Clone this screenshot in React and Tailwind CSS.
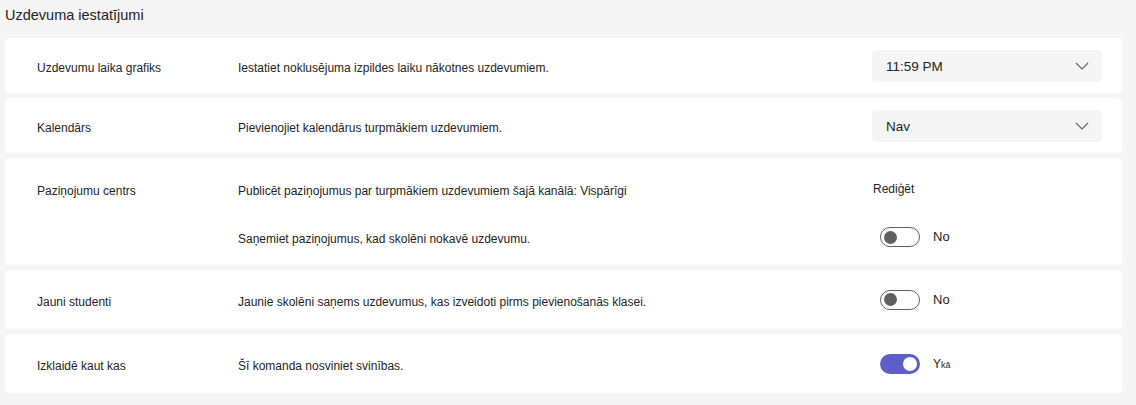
import React from "react";

const font = { fontFamily: "'Liberation Sans', Arial, sans-serif" };

const Chevron = () => (
  <svg width="14" height="8" viewBox="0 0 14 8" fill="none">
    <path d="M1 1l6 6 6-6" stroke="#616161" strokeWidth="1.1" />
  </svg>
);

const Dropdown = ({ value }) => (
  <div className="flex h-[32px] w-[230px] items-center justify-between rounded-[4px] bg-[#f5f5f5] pl-[14px] pr-[13px] text-[13.5px] text-[#242424]">
    <span className="pt-[3px]">{value}</span>
    <Chevron />
  </div>
);

const Toggle = ({ on }) =>
  on ? (
    <div className="flex h-[20px] w-[40px] items-center justify-end rounded-full bg-[#5b5fc7] pr-[3px]">
      <div className="h-[14px] w-[14px] rounded-full bg-white" />
    </div>
  ) : (
    <div className="flex h-[20px] w-[40px] items-center rounded-full border border-[#616161] bg-white pl-[3px]">
      <div className="h-[13px] w-[13px] rounded-full bg-[#616161]" />
    </div>
  );

const ToggleCell = ({ on, label }) => (
  <div className="flex items-center gap-[13px] pl-[8px]">
    <Toggle on={on} />
    <span className="text-[13px] text-[#242424]">{label}</span>
  </div>
);

const Row = ({ label, desc, control, h }) => (
  <div className={`flex items-center rounded-[4px] bg-white pl-[32px] pr-[20px] ${h}`}>
    <div className="w-[201px] pt-[4px] text-[12px] text-[#242424]">{label}</div>
    <div className="flex-1 pt-[4px] text-[12px] text-[#242424]">{desc}</div>
    <div className="w-[230px]">{control}</div>
  </div>
);

export default function App() {
  return (
    <div className="min-h-[405px] bg-[#f5f5f5] text-[#242424]" style={font}>
      <div className="px-[5px] pb-[11px] pt-[4px] text-[14.5px] leading-[23px]">Uzdevuma iestatījumi</div>
      <div className="flex w-[1122px] flex-col gap-[5px] pl-[5px]">
        <Row
          h="h-[55px]"
          label="Uzdevumu laika grafiks"
          desc="Iestatiet noklusējuma izpildes laiku nākotnes uzdevumiem."
          control={<Dropdown value="11:59 PM" />}
        />
        <Row
          h="h-[55px]"
          label="Kalendārs"
          desc="Pievienojiet kalendārus turpmākiem uzdevumiem."
          control={<Dropdown value="Nav" />}
        />
        <div className="flex h-[107px] flex-col gap-[14px] rounded-[4px] bg-white pl-[32px] pr-[20px] pt-[14px]">
          <div className="flex h-[34px] items-center">
            <div className="w-[201px] pt-[4px] text-[12px]">Paziņojumu centrs</div>
            <div className="flex-1 pt-[4px] text-[12px]">
              Publicēt paziņojumus par turpmākiem uzdevumiem šajā kanālā: Vispārīgi
            </div>
            <div className="w-[230px] pl-[1px] text-[12px]">Rediģēt</div>
          </div>
          <div className="flex h-[34px] items-center">
            <div className="w-[201px]" />
            <div className="flex-1 pt-[4px] text-[12px]">
              Saņemiet paziņojumus, kad skolēni nokavē uzdevumu.
            </div>
            <div className="w-[230px]">
              <ToggleCell on={false} label="No" />
            </div>
          </div>
        </div>
        <Row
          h="h-[59px]"
          label="Jauni studenti"
          desc="Jaunie skolēni saņems uzdevumus, kas izveidoti pirms pievienošanās klasei."
          control={<ToggleCell on={false} label="No" />}
        />
        <Row
          h="h-[59px]"
          label="Izklaidē kaut kas"
          desc="Šī komanda nosviniet svinības."
          control={
            <ToggleCell
              on
              label={
                <span className="text-[12px]">
                  Y<span className="text-[9px]">kā</span>
                </span>
              }
            />
          }
        />
      </div>
    </div>
  );
}
